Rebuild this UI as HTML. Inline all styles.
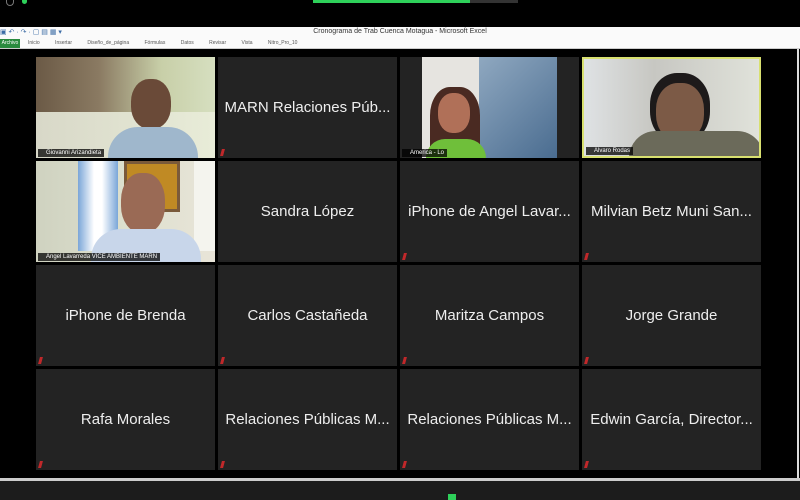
<!DOCTYPE html>
<html><head><meta charset="utf-8"><style>
body{margin:0;width:800px;height:500px;background:#000;position:relative;overflow:hidden;font-family:"Liberation Sans",sans-serif}
.a{position:absolute}
.t{position:absolute;width:179px;height:101px;background:#232323;color:#eee;font-size:15px;display:flex;align-items:center;justify-content:center;white-space:nowrap;overflow:hidden}
.m{position:absolute;left:3px;bottom:2px;width:3px;height:7px;background:#c0282a;transform:skewX(-15deg)}
.n{position:absolute;left:2px;bottom:1px;background:rgba(0,0,0,.75);color:#fff;font-size:6px;padding:1px 3px 1px 8px}
</style></head><body>
<div class="a" style="left:313px;top:0;width:157px;height:3px;background:#2ed05a"></div>
<div class="a" style="left:470px;top:0;width:48px;height:3px;background:#333"></div>
<div class="a" style="left:6px;top:0;width:6px;height:5px;border:1px solid #777;border-top:none;border-radius:0 0 4px 4px"></div>
<div class="a" style="left:22px;top:0;width:5px;height:4px;background:#2ed05a;border-radius:0 0 3px 3px"></div>
<div class="a" style="left:0;top:27px;width:800px;height:22px;background:#fafafa"></div>
<div class="a" style="left:0;top:28px;font-size:7px;color:#3b6ba5">▣ ↶ · ↷ · ▢ ▤ ▦ ▾</div>
<div class="a" style="left:0;top:28px;width:800px;text-align:center;font-size:7px;color:#333">Cronograma de Trab Cuenca Motagua - Microsoft Excel</div>
<div class="a" style="left:0;top:39px;width:20px;height:9px;background:#2a8a3e;color:#fff;font-size:5px;line-height:9px;text-align:center">Archivo</div>
<div class="a" style="left:28px;top:39px;font-size:5px;color:#555;word-spacing:14px;line-height:9px">Inicio Insertar Diseño_de_página Fórmulas Datos Revisar Vista Nitro_Pro_10</div>
<div class="a" style="left:0;top:48px;width:800px;height:1px;background:#ccc"></div>
<div class="a" style="left:797px;top:49px;width:2px;height:430px;background:#ddd"></div>
<div class="a" style="left:0;top:478px;width:800px;height:3px;background:#ccc"></div>
<div class="a" style="left:0;top:481px;width:800px;height:19px;background:#1c1c1c"></div>
<div class="a" style="left:448px;top:494px;width:8px;height:6px;background:#2ed05a"></div>

<div class="t" style="left:36px;top:57px;background:linear-gradient(90deg,#6b5a46 0,#8a7a62 35%,#c8cfa8 70%,#d6dfc0 100%)">
 <div class="a" style="left:0;top:55px;width:179px;height:46px;background:linear-gradient(90deg,#d8d8c8,#e8ecd8)"></div>
 <div class="a" style="left:95px;top:22px;width:40px;height:50px;background:#6a4a38;border-radius:45%"></div>
 <div class="a" style="left:72px;top:70px;width:90px;height:31px;background:#9fb7cc;border-radius:30px 30px 0 0"></div>
 <div class="n">Giovanni Arizandieta</div></div>
<div class="t" style="left:218px;top:57px">MARN Relaciones Púb...<div class="m"></div></div>
<div class="t" style="left:400px;top:57px">
 <div class="a" style="left:22px;top:0;width:57px;height:101px;background:#e6e4e0"></div>
 <div class="a" style="left:79px;top:0;width:78px;height:101px;background:linear-gradient(135deg,#8fa8c0,#4a6c90)"></div>
 <div class="a" style="left:30px;top:30px;width:50px;height:71px;background:#4a2a22;border-radius:40% 40% 0 0"></div>
 <div class="a" style="left:38px;top:36px;width:32px;height:40px;background:#b07058;border-radius:45%"></div>
 <div class="a" style="left:26px;top:82px;width:60px;height:19px;background:#6fbf3a;border-radius:20px 20px 0 0"></div>
 <div class="n">America - Lo</div></div>
<div class="t" style="left:582px;top:57px;box-sizing:border-box;border:2px solid #d8e070;background:linear-gradient(90deg,#dfe2e4,#c7c7c2 40%,#e0e2da)">
 <div class="a" style="left:66px;top:14px;width:60px;height:70px;background:#1d1a1a;border-radius:45%"></div>
 <div class="a" style="left:72px;top:24px;width:48px;height:58px;background:#7c5a46;border-radius:45%"></div>
 <div class="a" style="left:45px;top:72px;width:135px;height:27px;background:#6b6a5a;border-radius:30px 30px 0 0"></div>
 <div class="n">Alvaro Rodas</div></div>
<div class="t" style="left:36px;top:161px;background:linear-gradient(90deg,#cfd2c0,#dde0ce 50%,#e8e4d8)">
 <div class="a" style="left:42px;top:0;width:40px;height:90px;background:linear-gradient(90deg,#7aa6d8,#fff 40%,#fff 60%,#7aa6d8)"></div>
 <div class="a" style="left:88px;top:0;width:50px;height:45px;background:#c08a24;border:3px solid #7a5a3a"></div>
 <div class="a" style="left:158px;top:0;width:21px;height:90px;background:#f4f4ee"></div>
 <div class="a" style="left:85px;top:12px;width:44px;height:60px;background:#9a6a55;border-radius:45%"></div>
 <div class="a" style="left:55px;top:68px;width:110px;height:33px;background:#c8d6ea;border-radius:30px 30px 0 0"></div>
 <div class="n">Angel Lavarreda VICE AMBIENTE MARN</div></div>
<div class="t" style="left:218px;top:161px">Sandra López</div>
<div class="t" style="left:400px;top:161px">iPhone de Angel Lavar...<div class="m"></div></div>
<div class="t" style="left:582px;top:161px">Milvian Betz Muni San...<div class="m"></div></div>
<div class="t" style="left:36px;top:265px">iPhone de Brenda<div class="m"></div></div>
<div class="t" style="left:218px;top:265px">Carlos Castañeda<div class="m"></div></div>
<div class="t" style="left:400px;top:265px">Maritza Campos<div class="m"></div></div>
<div class="t" style="left:582px;top:265px">Jorge Grande<div class="m"></div></div>
<div class="t" style="left:36px;top:369px">Rafa Morales<div class="m"></div></div>
<div class="t" style="left:218px;top:369px">Relaciones Públicas M...<div class="m"></div></div>
<div class="t" style="left:400px;top:369px">Relaciones Públicas M...<div class="m"></div></div>
<div class="t" style="left:582px;top:369px">Edwin García, Director...<div class="m"></div></div>
</body></html>
